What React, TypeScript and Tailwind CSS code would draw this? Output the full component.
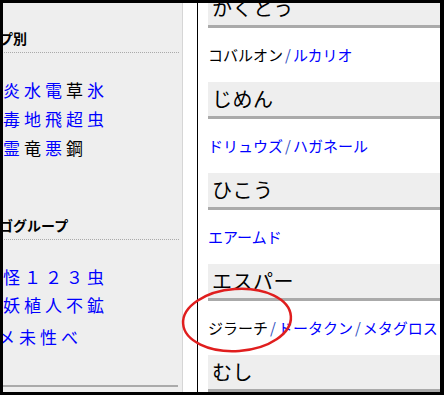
import React from 'react';

type Item = { t: string; link: boolean };

const jp = { fontFamily: '"Noto Sans CJK JP", "Noto Sans", sans-serif' };

const typeRows: Item[][] = [
  [
    { t: '炎', link: true },
    { t: '水', link: true },
    { t: '電', link: true },
    { t: '草', link: false },
    { t: '氷', link: true },
  ],
  [
    { t: '毒', link: true },
    { t: '地', link: true },
    { t: '飛', link: true },
    { t: '超', link: true },
    { t: '虫', link: true },
  ],
  [
    { t: '霊', link: true },
    { t: '竜', link: false },
    { t: '悪', link: true },
    { t: '鋼', link: false },
  ],
];

const eggRows: Item[][] = [
  [
    { t: '怪', link: true },
    { t: '１', link: true },
    { t: '２', link: true },
    { t: '３', link: true },
    { t: '虫', link: true },
  ],
  [
    { t: '妖', link: true },
    { t: '植', link: true },
    { t: '人', link: true },
    { t: '不', link: true },
    { t: '鉱', link: true },
  ],
];

const sections: { title: string; names: Item[] }[] = [
  {
    title: 'かくとう',
    names: [
      { t: 'コバルオン', link: false },
      { t: 'ルカリオ', link: true },
    ],
  },
  {
    title: 'じめん',
    names: [
      { t: 'ドリュウズ', link: true },
      { t: 'ハガネール', link: true },
    ],
  },
  {
    title: 'ひこう',
    names: [{ t: 'エアームド', link: true }],
  },
  {
    title: 'エスパー',
    names: [
      { t: 'ジラーチ', link: false },
      { t: 'ドータクン', link: true },
      { t: 'メタグロス', link: true },
    ],
  },
  { title: 'むし', names: [] },
];

const Row: React.FC<{ items: Item[]; className?: string }> = ({ items, className }) => (
  <div className={`flex gap-[4px] h-[20px] leading-[20px] text-[17px] ${className ?? ''}`}>
    {items.map((it, i) => (
      <span key={i} className={`w-[17px] text-center ${it.link ? 'text-[#0000ff]' : 'text-black'}`}>
        {it.t}
      </span>
    ))}
  </div>
);

const App: React.FC = () => {
  return (
    <div className="w-[444px] h-[395px] bg-black pt-[3px] pl-[3px] pr-[4px] pb-[3px] relative" style={jp}>
      <div className="flex w-full h-full bg-white overflow-hidden">
        {/* sidebar, scrolled a little to the right so the headings are clipped */}
        <div className="w-[180px] shrink-0 h-full bg-[#eeeeee] border-r border-[#d6d6d6] flex flex-col overflow-hidden">
          <div className="-ml-[32px] mt-[27px] h-[16px] leading-[16px] text-[14px] font-bold text-black whitespace-nowrap">
            タイプ別
          </div>
          <div className="ml-[1px] mr-[3px] mt-[6px] border-t border-dotted border-[#aaaaaa]" />
          <Row items={typeRows[0]} className="mt-[27px]" />
          <Row items={typeRows[1]} className="mt-[9px]" />
          <Row items={typeRows[2]} className="mt-[9px]" />

          <div className="-ml-[32px] mt-[59px] h-[16px] leading-[16px] text-[14px] font-bold text-black whitespace-nowrap">
            タマゴグループ
          </div>
          <div className="ml-[1px] mr-[3px] mt-[6px] border-t border-dotted border-[#aaaaaa]" />
          <Row items={eggRows[0]} className="mt-[27px]" />
          <Row items={eggRows[1]} className="mt-[8px]" />
          <div className="flex gap-[4px] h-[20px] leading-[20px] text-[17px] mt-[12px] -ml-[5px] text-[#0000ff]">
            <span className="w-[17px] text-center">メ</span>
            <span className="w-[17px] text-center">未</span>
            <span className="w-[17px] text-center">性</span>
            <span className="w-[17px] text-center">べ</span>
          </div>

          <div className="mt-auto mb-[5px] mr-[4px] border-t-2 border-[#aaaaaa]" />
        </div>

        {/* gutter */}
        <div className="w-[14px] shrink-0" />
        <div className="w-px shrink-0 bg-black" />
        <div className="w-[10px] shrink-0" />

        {/* main list */}
        <div className="flex-1 flex flex-col -mt-[12px]">
          {sections.map((s) => (
            <div key={s.title}>
              <div className="h-[37px] shrink-0 bg-[#eeeeee] border-b-[3px] border-[#aaaaaa] flex items-center pl-[4px] text-[20px] text-black tracking-[0.5px]">
                {s.title}
              </div>
              {s.names.length > 0 && (
                <div className="h-[54px] flex items-center text-[15px] whitespace-nowrap">
                  {s.names.map((n, i) => (
                    <React.Fragment key={n.t}>
                      {i > 0 && <span className="text-[#3050c0] px-[2px]">/</span>}
                      <span className={n.link ? 'text-[#0000ff]' : 'text-black'}>{n.t}</span>
                    </React.Fragment>
                  ))}
                </div>
              )}
            </div>
          ))}
        </div>
      </div>

      {/* red annotation ring */}
      <svg className="absolute left-0 top-0 pointer-events-none" width="444" height="395">
        <ellipse
          cx="237"
          cy="320"
          rx="54"
          ry="31"
          transform="rotate(-4 237 320)"
          fill="none"
          stroke="#e01e1e"
          strokeWidth="2.5"
        />
      </svg>
    </div>
  );
};

export default App;
